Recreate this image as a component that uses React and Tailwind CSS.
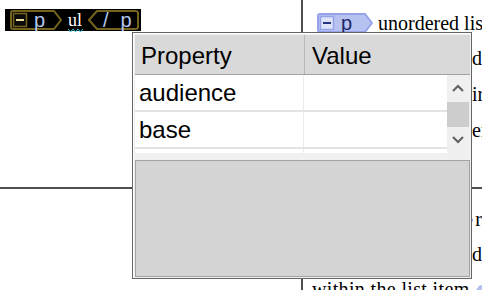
const sans = "font-['Liberation_Sans',Arial,sans-serif]";
const serif = "font-['Liberation_Serif','Times_New_Roman',serif]";

function Chevron({ up }) {
  return (
    <svg width="12" height="8" viewBox="0 0 12 8">
      <path
        d={up ? "M1 7 L6 2 L11 7" : "M1 1 L6 6 L11 1"}
        fill="none"
        stroke="#5f5f5f"
        strokeWidth="2"
      />
    </svg>
  );
}

// tag shape with the point on the right (opening tag)
function OpenTag({ width, fill, stroke, boxFill, dash, textColor, children }) {
  return (
    <span className="relative flex h-[20px] shrink-0 items-center" style={{ width }}>
      <svg className="absolute inset-0" width={width} height="20" viewBox={`0 0 ${width} 20`}>
        <path
          d={`M3 1 H${width - 8} L${width - 1} 10 L${width - 8} 19 H3 Q1 19 1 17 V3 Q1 1 3 1 Z`}
          fill={fill}
          stroke={stroke}
          strokeWidth="2"
        />
        <rect x="3.5" y="3.5" width="13" height="13" fill={boxFill} stroke={stroke} strokeWidth="1.5" />
        <path d="M6 10 H14" stroke={dash} strokeWidth="2" />
      </svg>
      <span
        className={`relative ml-[24px] text-[20px] leading-none ${sans}`}
        style={{ color: textColor }}
      >
        {children}
      </span>
    </span>
  );
}

function CloseTag() {
  return (
    <span className="relative flex h-[20px] w-[51px] shrink-0 items-center">
      <svg className="absolute inset-0" width="51" height="20" viewBox="0 0 51 20">
        <path
          d="M9 1 H47 Q50 1 50 3 V17 Q50 19 47 19 H9 L1 10 Z"
          fill="#000"
          stroke="#76621f"
          strokeWidth="2"
        />
      </svg>
      <span className={`relative ml-[15px] text-[20px] leading-none text-[#b3c7ef] ${sans}`}>/</span>
      <span className={`relative ml-[12px] text-[20px] leading-none text-[#b3c7ef] ${sans}`}>p</span>
    </span>
  );
}

export default function App() {
  return (
    <div className="relative h-[290px] w-[482px] overflow-hidden bg-white">
      {/* document behind the popup */}
      <div className={`flex h-full ${serif} text-[20px] text-black`}>
        <div className="flex w-[303px] shrink-0 flex-col border-r-2 border-[#4f4f4f]">
          <div className="h-[189px] border-b-2 border-[#4f4f4f] pl-[5px] pt-[9px]">
            <div className="flex h-[22px] w-[136px] items-center gap-[6px] bg-black pl-[5px]">
              <OpenTag width={52} fill="#000" stroke="#76621f" boxFill="#0b0b0b" dash="#eadf9c" textColor="#b3c7ef">
                p
              </OpenTag>
              <span className="relative text-[18px] leading-none text-white">
                ul
                <svg className="absolute left-0 top-[17px]" width="16" height="5" viewBox="0 0 16 5">
                  <path d="M0 1 L2.5 4 L5 1 L7.5 4 L10 1 L12.5 4 L15 1" fill="none" stroke="#33c4d6" strokeWidth="1" />
                </svg>
              </span>
              <CloseTag />
            </div>
          </div>
          <div className="flex-1" />
        </div>

        <div className="flex min-w-0 flex-1 flex-col overflow-hidden">
          <div className="h-[189px] shrink-0 border-b-2 border-[#4f4f4f] pl-[14px] pt-[12px] leading-[36px]">
            <div className="flex h-[22px] items-center gap-[5px] whitespace-nowrap">
              <OpenTag width={56} fill="#b7c2f1" stroke="#95a4ea" boxFill="#dfe3f8" dash="#24347f" textColor="#1b2766">
                p
              </OpenTag>
              <span className="text-[20px]">unordered list</span>
            </div>
            <p className="mt-[6px] whitespace-nowrap pl-[155px]">d</p>
            <p className="whitespace-nowrap pl-[155px]">ir</p>
            <p className="whitespace-nowrap pl-[155px]">er</p>
          </div>
          <div className="flex-1 pt-[13px] leading-[35px]">
            <p className="flex h-[35px] items-center whitespace-nowrap pl-[167px]">
              <svg width="5" height="18" viewBox="0 0 5 18">
                <path d="M0 1 L4 9 L0 17" fill="none" stroke="#95a4ea" strokeWidth="1.5" />
              </svg>
              <span className="ml-[2px]">r</span>
            </p>
            <p className="h-[35px] whitespace-nowrap pl-[169px]">de</p>
            <p className="flex h-[35px] items-center gap-[6px] whitespace-nowrap pl-[9px] tracking-[0.35px]">
              within the list item
              <svg width="14" height="20" viewBox="0 0 14 20">
                <path d="M8 1 H14 V19 H8 L1 10 Z" fill="#b7c2f1" stroke="#95a4ea" strokeWidth="1.5" />
              </svg>
            </p>
          </div>
        </div>
      </div>

      {/* property popup */}
      <div className={`absolute left-[132px] top-[32px] flex h-[247px] w-[340px] flex-col border border-[#666] bg-[#f0f0f0] ${sans} text-[24px] leading-none text-black`}>
        <div className="flex h-full flex-col border-l border-t border-white p-px">
          <div className="flex h-[40px] shrink-0 border-b border-[#a3a3a3] bg-[#d9d9d9]">
            <div className="flex w-[170px] items-center border-r border-[#b8b8b8] pl-[6px] pt-[3px]">Property</div>
            <div className="flex flex-1 items-center pl-[7px] pt-[3px]">Value</div>
          </div>
          <div className="flex h-[78px] shrink-0 overflow-hidden">
            <div className="flex-1 bg-white">
              {["audience", "base", ""].map((name, i) => (
                <div key={i} className="flex h-[37px] border-b-2 border-[#e4e4e4]">
                  <div className="flex w-[169px] items-center border-r border-[#ececec] pl-[4px]">{name}</div>
                  <div className="flex-1" />
                </div>
              ))}
            </div>
            <div className="flex w-[23px] flex-col items-center bg-[#f0f0f0] pr-px">
              <div className="flex h-[27px] items-center pb-[2px]">
                <Chevron up />
              </div>
              <div className="h-[25px] w-full bg-[#cdcdcd]" />
              <div className="flex h-[26px] items-center">
                <Chevron />
              </div>
            </div>
          </div>
          <div className="mt-[7px] flex-1 border border-[#a3a3a3] bg-[#d4d4d4]" />
        </div>
      </div>
    </div>
  );
}
